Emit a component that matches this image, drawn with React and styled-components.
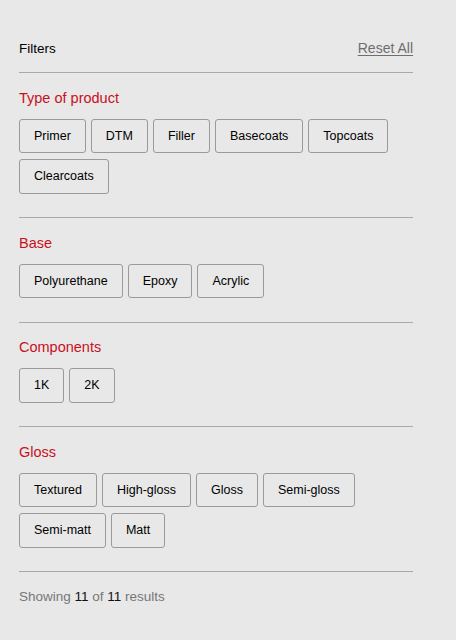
import React from 'react';
import styled, { createGlobalStyle } from 'styled-components';

const GlobalStyle = createGlobalStyle`
  html, body {
    margin: 0;
    padding: 0;
    background: #e8e8e8;
  }
  body {
    font-family: "Liberation Sans", Arial, sans-serif;
    color: #000;
  }
`;

const Panel = styled.div`
  width: 394px;
  padding: 38px 0 0 19px;
`;

const Header = styled.div`
  display: flex;
  justify-content: space-between;
  align-items: center;
  height: 20px;
  padding-bottom: 14px;
  border-bottom: 1px solid #a9a9a9;
`;

const Title = styled.span`
  font-size: 13.5px;
  color: #000;
`;

const Reset = styled.a`
  font-size: 14px;
  color: #6e6e6e;
  text-decoration: underline;
  text-underline-offset: 2px;
  cursor: pointer;
`;

const Section = styled.div`
  padding: 15.5px 0 23.5px;
  border-bottom: 1px solid #a9a9a9;
`;

const Label = styled.h3`
  margin: 0 0 12px;
  font-size: 14.5px;
  font-weight: 400;
  line-height: 18px;
  color: #c8101e;
`;

const Options = styled.div`
  display: flex;
  flex-wrap: wrap;
  gap: 6px 5px;
`;

const Chip = styled.button`
  height: 34.5px;
  padding: 0 14px;
  border: 1px solid #9a9a9a;
  border-radius: 3px;
  background: #e8e8e8;
  font-family: inherit;
  font-size: 12.5px;
  color: #000;
  cursor: pointer;
`;

const Footer = styled.p`
  margin: 17px 0 0;
  font-size: 13.5px;
  color: #777;

  b {
    font-weight: 400;
    color: #111;
  }
`;

const groups = [
  { name: 'Type of product', items: ['Primer', 'DTM', 'Filler', 'Basecoats', 'Topcoats', 'Clearcoats'] },
  { name: 'Base', items: ['Polyurethane', 'Epoxy', 'Acrylic'] },
  { name: 'Components', items: ['1K', '2K'] },
  { name: 'Gloss', items: ['Textured', 'High-gloss', 'Gloss', 'Semi-gloss', 'Semi-matt', 'Matt'] },
];

export default function App() {
  return (
    <>
      <GlobalStyle />
      <Panel>
        <Header>
          <Title>Filters</Title>
          <Reset>Reset All</Reset>
        </Header>
        {groups.map((g) => (
          <Section key={g.name}>
            <Label>{g.name}</Label>
            <Options>
              {g.items.map((it) => (
                <Chip key={it}>{it}</Chip>
              ))}
            </Options>
          </Section>
        ))}
        <Footer>
          Showing <b>11</b> of <b>11</b> results
        </Footer>
      </Panel>
    </>
  );
}
